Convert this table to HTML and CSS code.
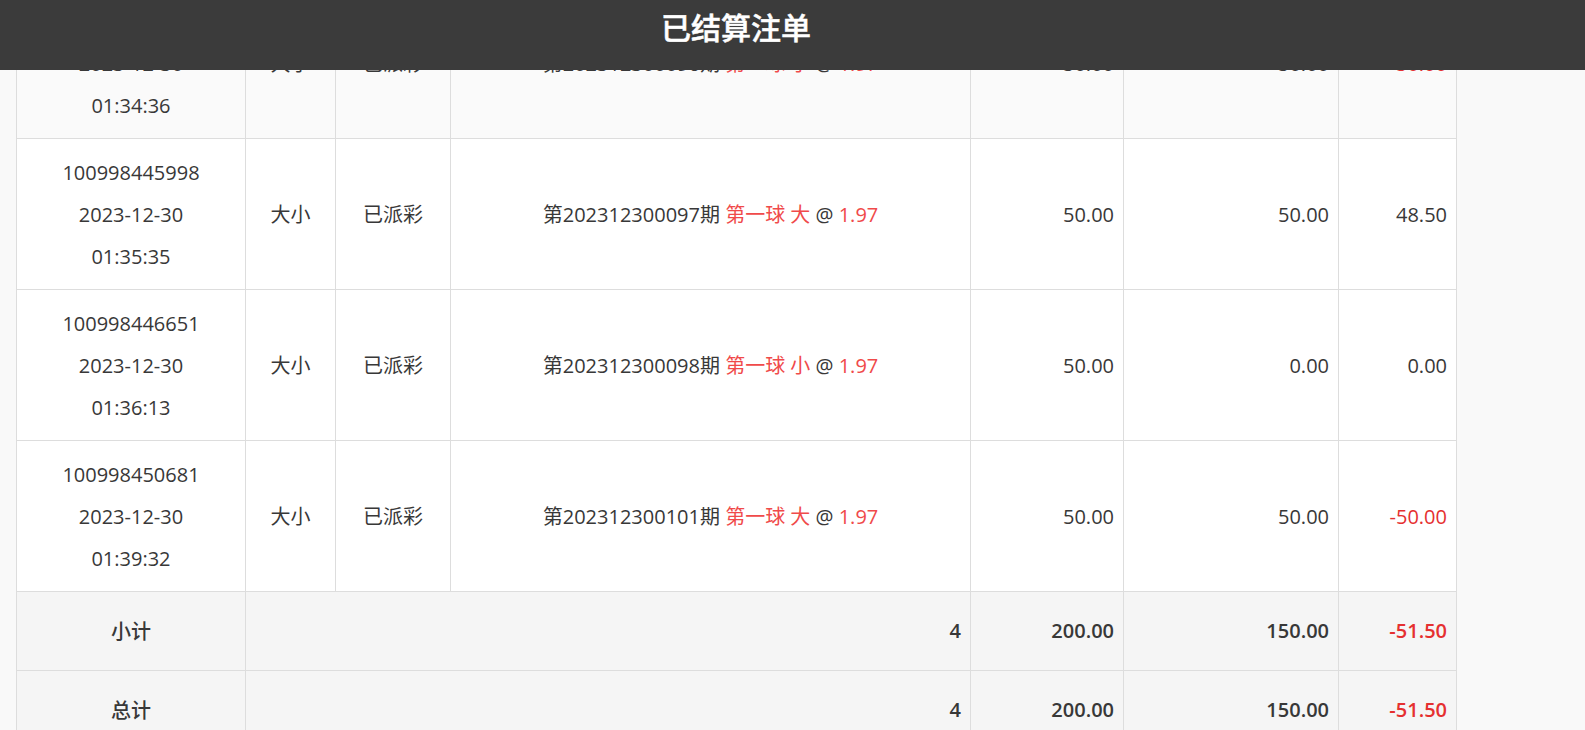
FILE: index.html
```html
<!DOCTYPE html>
<html lang="zh-CN">
<head>
  <meta charset="UTF-8">
  <meta name="viewport" content="width=device-width, initial-scale=1.0">
  <title>已结算注单</title>
  <link rel="stylesheet" href="styles.css">
</head>
<body>
  <header class="header">
    <div class="header-inner">
      <h1 class="title">已结算注单</h1>
    </div>
  </header>

  <div class="bets-wrap">
    <table class="bets-table">
      <colgroup>
        <col class="col-order">
        <col class="col-game">
        <col class="col-status">
        <col class="col-detail">
        <col class="col-amount">
        <col class="col-valid">
        <col class="col-result">
      </colgroup>
      <tbody>
        <tr class="row-hover">
          <td>100998445120<br>2023-12-30<br>01:34:36</td>
          <td>大小</td>
          <td>已派彩</td>
          <td>第202312300096期 <span class="red">第一球 小</span> @ <span class="red">1.97</span></td>
          <td class="num">50.00</td>
          <td class="num">50.00</td>
          <td class="num neg">-50.00</td>
        </tr>
        <tr>
          <td>100998445998<br>2023-12-30<br>01:35:35</td>
          <td>大小</td>
          <td>已派彩</td>
          <td>第202312300097期 <span class="red">第一球 大</span> @ <span class="red">1.97</span></td>
          <td class="num">50.00</td>
          <td class="num">50.00</td>
          <td class="num">48.50</td>
        </tr>
        <tr>
          <td>100998446651<br>2023-12-30<br>01:36:13</td>
          <td>大小</td>
          <td>已派彩</td>
          <td>第202312300098期 <span class="red">第一球 小</span> @ <span class="red">1.97</span></td>
          <td class="num">50.00</td>
          <td class="num">0.00</td>
          <td class="num">0.00</td>
        </tr>
        <tr>
          <td>100998450681<br>2023-12-30<br>01:39:32</td>
          <td>大小</td>
          <td>已派彩</td>
          <td>第202312300101期 <span class="red">第一球 大</span> @ <span class="red">1.97</span></td>
          <td class="num">50.00</td>
          <td class="num">50.00</td>
          <td class="num neg">-50.00</td>
        </tr>
        <tr class="row-sum">
          <td>小计</td>
          <td colspan="3" class="num">4</td>
          <td class="num">200.00</td>
          <td class="num">150.00</td>
          <td class="num neg">-51.50</td>
        </tr>
        <tr class="row-sum">
          <td>总计</td>
          <td colspan="3" class="num">4</td>
          <td class="num">200.00</td>
          <td class="num">150.00</td>
          <td class="num neg">-51.50</td>
        </tr>
      </tbody>
    </table>
  </div>
</body>
</html>
```

FILE: styles.css
```css
* {
  margin: 0;
  padding: 0;
  box-sizing: border-box;
}

body {
  background-color: #f9f9f9;
  color: #383838;
  font-family: "Open Sans", "Noto Sans CJK SC", sans-serif;
  font-size: 20px;
  overflow: hidden;
}

/* fixed title bar, sits over the scrolled list */
.header {
  position: fixed;
  top: 0;
  left: 0;
  right: 0;
  height: 70px;
  background-color: #3b3b3b;
  z-index: 10;
}

.header-inner {
  width: 1440px;
  margin-left: 16px;
  text-align: center;
}

.title {
  color: #fff;
  font-family: "Noto Sans CJK SC", sans-serif;
  font-size: 30px;
  font-weight: 500;
  -webkit-text-stroke: 0.5px #fff;
  line-height: 52px;
}

/* list is scrolled a little, first row is cut by the header */
.bets-wrap {
  padding-left: 16px;
  margin-top: -13px;
}

.bets-table {
  width: 1440px;
  border-collapse: collapse;
  table-layout: fixed;
  background-color: #fff;
}

.col-order { width: 229px; }
.col-game { width: 90px; }
.col-status { width: 115px; }
.col-detail { width: 520px; }
.col-amount { width: 153px; }
.col-valid { width: 215px; }
.col-result { width: 118px; }

.bets-table td {
  border: 1px solid #ddd;
  padding: 13px 8px 11px;
  line-height: 42px;
  text-align: center;
  vertical-align: middle;
}

.bets-table td.num {
  text-align: right;
  padding-right: 9px;
}

.row-hover td {
  background-color: #fafafa;
}

.red {
  color: #f04a4a;
}

.neg {
  color: #e53030;
}

.row-sum td {
  background-color: #f5f5f5;
  font-weight: 600;
  padding-top: 18px;
  padding-bottom: 18px;
}

.row-sum td:first-child {
  font-family: "Noto Sans CJK SC", sans-serif;
  font-weight: 500;
}
```
